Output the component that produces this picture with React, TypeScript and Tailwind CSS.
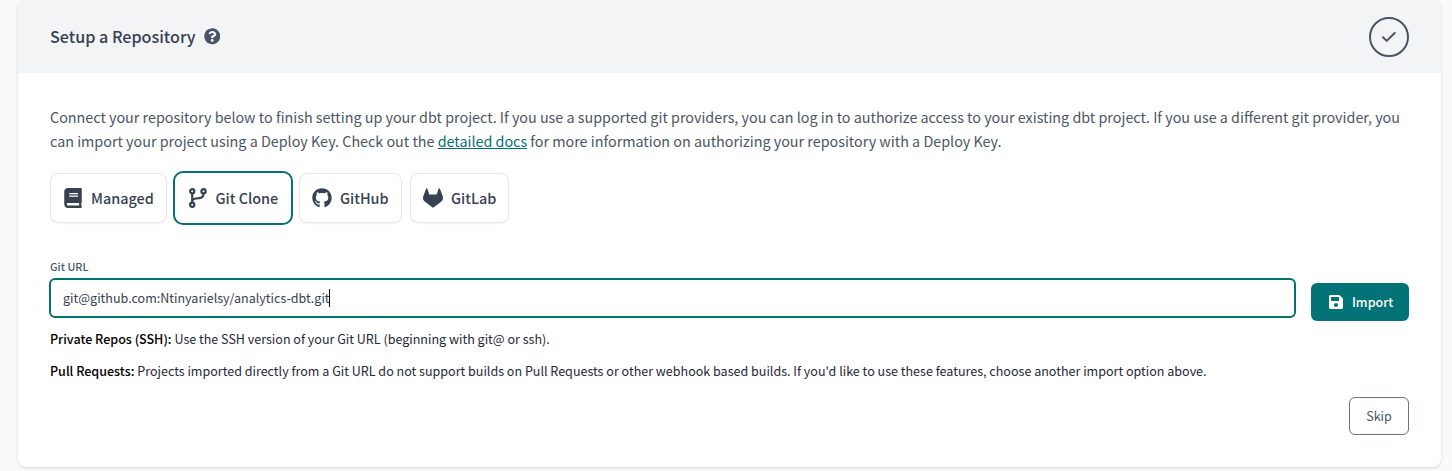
import type { ReactNode } from "react";
import { FaBook, FaQuestionCircle, FaSave } from "react-icons/fa";
import { FaGithub, FaGitlab } from "react-icons/fa6";

function BranchIcon() {
  return (
    <svg width="18" height="20" viewBox="0 0 18 20" fill="none" stroke="currentColor" strokeWidth="2.2">
      <circle cx="3.2" cy="3.2" r="2.1" />
      <circle cx="3.2" cy="16.8" r="2.1" />
      <circle cx="14.5" cy="3.2" r="2.1" />
      <path d="M3.2 5.3v9.4M14.5 5.3c0 3.2-1.4 4.6-4.2 4.8L7 10.5c-2 .2-3.8 1-3.8 3" />
    </svg>
  );
}

function Provider({ icon, label, width, active = false }: { icon: ReactNode; label: string; width: string; active?: boolean }) {
  const frame = active
    ? "h-[54px] border-2 border-[#04726f] rounded-[10px] pl-[14px]"
    : "h-[50px] border border-[#e5e7eb] rounded-lg pl-3 shadow-xs";
  return (
    <button className={`flex items-center bg-white text-[#374151] ${frame} ${width}`}>
      {icon}
      <span className={`${active ? "ml-[8.5px]" : "ml-2"} whitespace-nowrap text-[14.4px] font-medium leading-5`}>{label}</span>
    </button>
  );
}

export default function App() {
  return (
    <div className="h-[471px] overflow-hidden bg-[#f9fafb] pl-[18px] pr-[11px] font-['Noto_Sans_CJK_SC',sans-serif] text-[#374151]">
      <main className="h-[467px] overflow-hidden rounded-lg bg-white shadow-[0_1px_3px_rgba(0,0,0,0.15)]">
        <header className="flex h-[73px] items-center justify-between bg-[#f3f4f6] pl-8 pr-8">
          <h1 className="flex items-center gap-2 pb-px text-[16.15px] font-medium leading-6">
            <span className="whitespace-nowrap">Setup a Repository</span>
            <FaQuestionCircle className="mt-px size-[16.5px] text-[#4b5563]" />
          </h1>
          <div className="flex size-10 items-center justify-center rounded-full border-2 border-[#4b5563]">
            <svg width="14" height="10" viewBox="0 0 14 10" fill="none" stroke="#4b5563" strokeWidth="2" strokeLinecap="round" strokeLinejoin="round">
              <path d="M1 5.2 4.7 8.9 12.7 1" />
            </svg>
          </div>
        </header>
        <section className="px-8 pt-8">
          <p className="whitespace-nowrap text-[14.33px] leading-6 text-[#4b5563]">
            Connect your repository below to finish setting up your dbt project. If you use a supported git providers, you can log in to authorize access to your existing dbt project. If you use a different git provider, you
            <br />
            can import your project using a Deploy Key. Check out the <a className="text-[#04726f] underline" href="#docs">detailed docs</a> for more information on authorizing your repository with a Deploy Key.
          </p>
          <div className="mt-[18px] flex h-[54px] items-center">
            <Provider width="w-[117px]" label="Managed" icon={<FaBook className="size-5" />} />
            <div className="ml-[6px] mr-[6px]">
              <Provider width="w-[120px]" active label="Git Clone" icon={<BranchIcon />} />
            </div>
            <Provider width="w-[103px]" label="GitHub" icon={<FaGithub className="size-5" />} />
            <div className="ml-2">
              <Provider width="w-[99px]" label="GitLab" icon={<FaGitlab className="size-5" />} />
            </div>
          </div>
          <label className="mt-[33px] block text-[10.8px] font-medium leading-4 text-[#4b5563]">Git URL</label>
          <div className="mt-1 flex items-end justify-between">
            <div className="-ml-px flex h-10 w-[1247px] items-center rounded-md border-2 border-[#04726f] pl-3 text-[12.54px]">
              <span className="whitespace-nowrap">git@github.com:Ntinyarielsy/analytics-dbt.git</span>
              <span className="-ml-px h-[18px] w-px bg-black" />
            </div>
            <button className="-mb-[3px] flex h-[38px] w-[98px] items-center rounded-md bg-[#047377] pl-[17px] text-[12.5px] font-medium text-white">
              <FaSave className="size-4" />
              <span className="ml-2">Import</span>
            </button>
          </div>
          <p className="mt-[11px] whitespace-nowrap text-[12.54px] leading-5 text-[#1f2937]">
            <b className="font-medium text-black">Private Repos (SSH):</b> Use the SSH version of your Git URL (beginning with git@ or ssh).
          </p>
          <p className="mt-3 whitespace-nowrap text-[12.54px] leading-5 text-[#1f2937]">
            <b className="font-medium text-black">Pull Requests:</b> Projects imported directly from a Git URL do not support builds on Pull Requests or other webhook based builds. If you'd like to use these features, choose another import option above.
          </p>
          <div className="mt-4 flex justify-end">
            <button className="h-[38px] w-[60px] rounded-md border border-[#6b7280] text-[12.6px] text-[#4b5563]">Skip</button>
          </div>
        </section>
      </main>
    </div>
  );
}
